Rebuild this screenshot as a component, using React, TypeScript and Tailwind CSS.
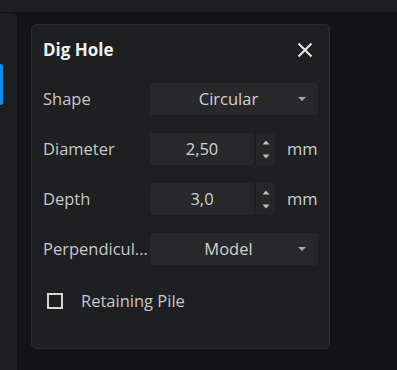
import React from "react";

const font = { fontFamily: '"Open Sans", "Noto Sans", sans-serif' };

function Caret() {
  return (
    <svg width="10" height="6" viewBox="0 0 10 6" className="shrink-0">
      <path d="M1 1 L9 1 L5 5 Z" fill="#a8a8a8" />
    </svg>
  );
}

function Select({ value }: { value: string }) {
  return (
    <div className="flex h-[32px] w-[168px] items-center rounded-[3px] bg-[#272829] pr-[11px]">
      <div className="flex-1 pl-[10px] text-center text-[16.5px] text-[#d2d2d2]">{value}</div>
      <Caret />
    </div>
  );
}

function NumberInput({ value }: { value: string }) {
  return (
    <div className="flex items-center">
      <div className="flex h-[32px] w-[104px] items-center justify-center rounded-[3px] bg-[#272829] text-[16.5px] text-[#d2d2d2]">
        {value}
      </div>
      <div className="ml-[2px] flex h-[32px] w-[19px] flex-col items-center justify-center gap-[9px] rounded-[3px] bg-[#252627]">
        <svg width="8" height="5" viewBox="0 0 8 5">
          <path d="M0.5 4.5 L7.5 4.5 L4 0.5 Z" fill="#bdbdbd" />
        </svg>
        <svg width="8" height="5" viewBox="0 0 8 5">
          <path d="M0.5 0.5 L7.5 0.5 L4 4.5 Z" fill="#bdbdbd" />
        </svg>
      </div>
      <div className="ml-[12px] text-[16.5px] text-[#cfcfcf]">mm</div>
    </div>
  );
}

function Row({ label, children }: { label: string; children: React.ReactNode }) {
  return (
    <div className="flex h-[32px] items-center">
      <div className="w-[107px] whitespace-nowrap text-[16.5px] text-[#c8c8c8]">{label}</div>
      {children}
    </div>
  );
}

export default function App() {
  return (
    <div className="flex h-[370px] w-[397px] flex-col overflow-hidden bg-[#121315]" style={font}>
      <div className="h-[12px] shrink-0 bg-[#1d1e20]" />
      <div className="flex flex-1">
        <div className="relative mt-[1px] w-[17px] rounded-tr-[5px] bg-[#1d1e20]">
          <div className="absolute left-0 top-[51px] h-[41px] w-[3px] rounded-r-[2px] bg-[#1689e6]" />
        </div>
        <div className="ml-[14px] mt-[12px] h-[325px] w-[299px] rounded-[5px] border border-[#2a2b2d] bg-[#1e1f21] pl-[11px] pr-[11px]">
          <div className="flex h-[49px] items-center justify-between">
            <div className="text-[17px] font-bold text-[#f0f0f0]">Dig Hole</div>
            <svg width="16" height="16" viewBox="0 0 16 16" className="mr-[5px]">
              <path d="M1.5 1.5 L14.5 14.5 M14.5 1.5 L1.5 14.5" stroke="#e6e6e6" strokeWidth="2" />
            </svg>
          </div>
          <div className="mt-[9px] flex flex-col gap-[18px]">
            <Row label="Shape">
              <Select value="Circular" />
            </Row>
            <Row label="Diameter">
              <NumberInput value="2,50" />
            </Row>
            <Row label="Depth">
              <NumberInput value="3,0" />
            </Row>
            <Row label="Perpendicul...">
              <Select value="Model" />
            </Row>
          </div>
          <div className="mt-[24px] flex items-center pl-[4px]">
            <div className="h-[16px] w-[16px] border-2 border-[#d4d4d4]" />
            <div className="ml-[18px] text-[16.5px] text-[#c8c8c8]">Retaining Pile</div>
          </div>
        </div>
      </div>
    </div>
  );
}
